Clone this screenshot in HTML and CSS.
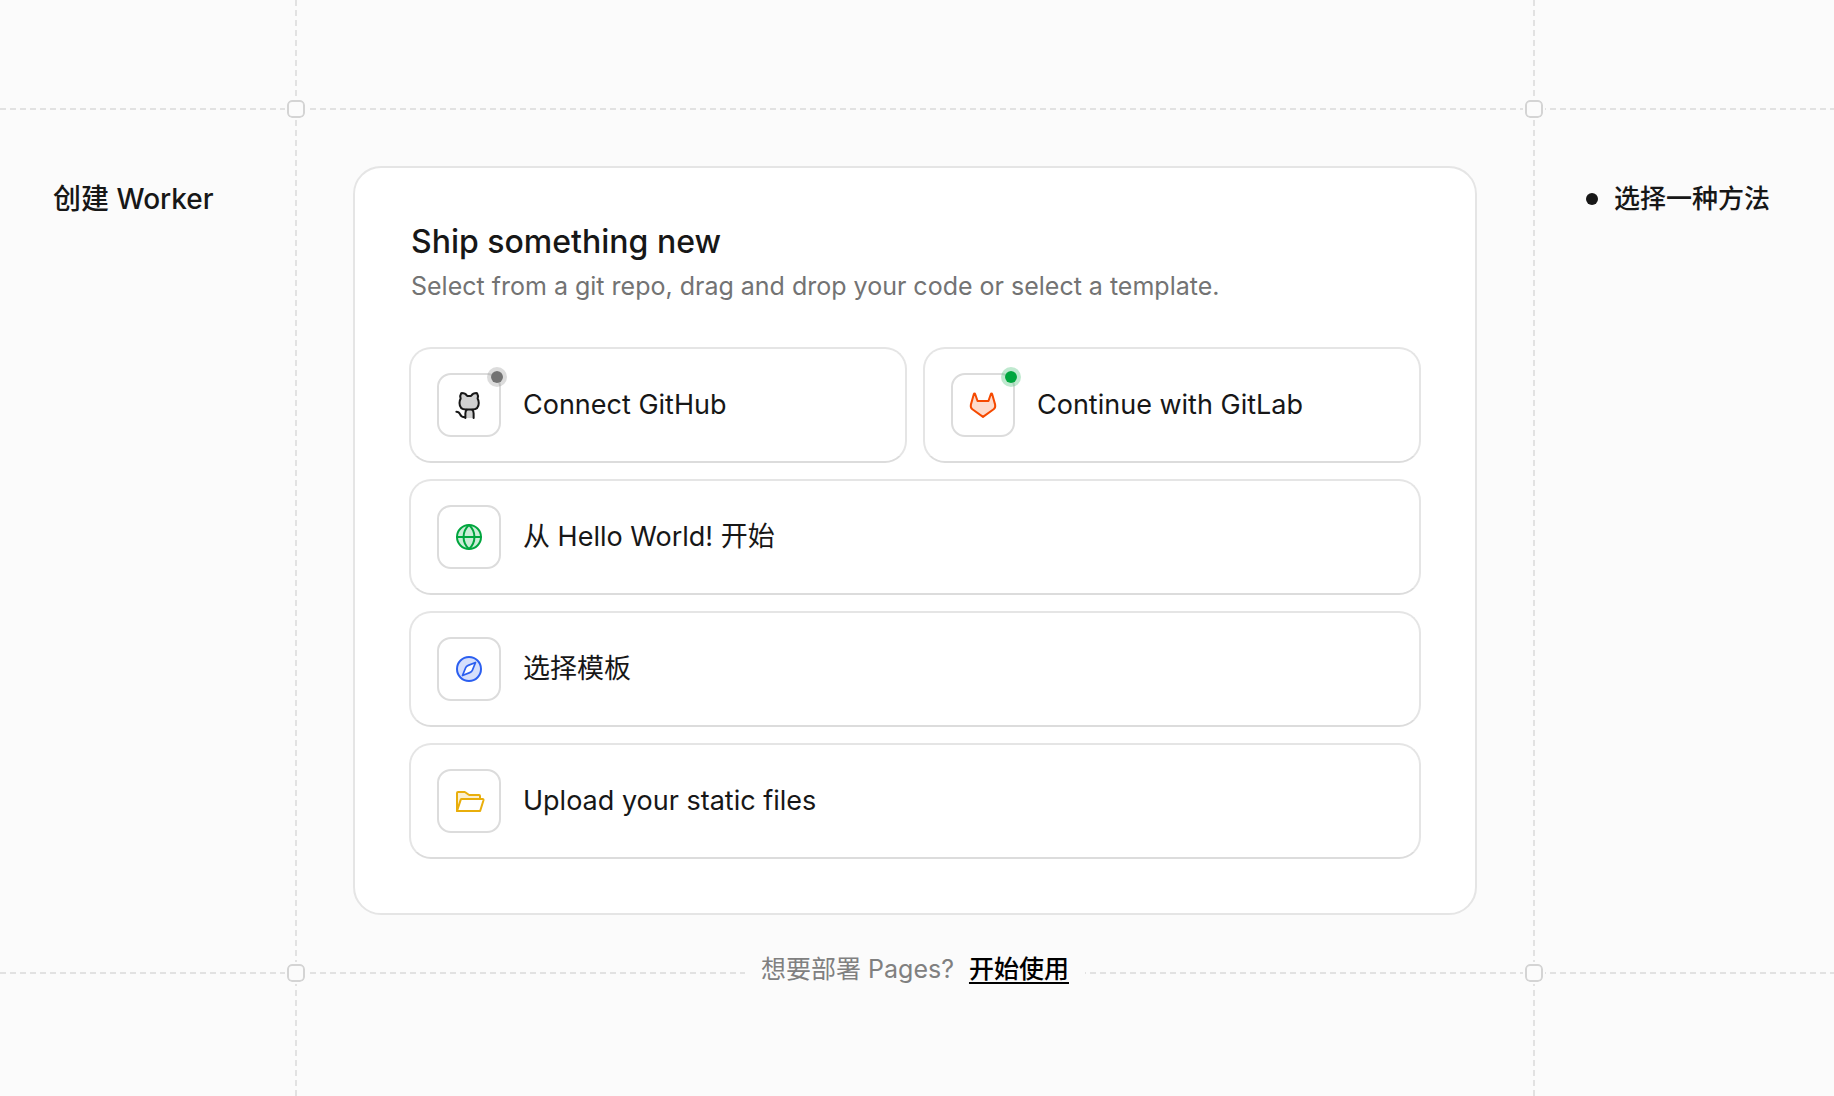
FILE: index.html
```
<!DOCTYPE html>
<html lang="zh-CN">
<head>
    <meta charset="UTF-8">
    <meta name="viewport" content="width=device-width, initial-scale=1.0">
    <title>创建 Worker</title>
    <link rel="stylesheet" href="styles.css">
</head>
<body>
    <div class="page">
        <div class="line line-top"></div>
        <div class="line line-bottom"></div>
        <div class="line line-left"></div>
        <div class="line line-right"></div>
        <span class="knot knot-tl"></span>
        <span class="knot knot-tr"></span>
        <span class="knot knot-bl"></span>
        <span class="knot knot-br"></span>

        <header class="side-title">
            <h1>创建 Worker</h1>
        </header>

        <main class="content">
            <section class="card">
                <h2>Ship something new</h2>
                <p class="subtitle">Select from a git repo, drag and drop your code or select a template.</p>

                <div class="options">
                    <button type="button" class="option">
                        <span class="icon icon-github">
                            <svg viewBox="0 0 256 256" aria-hidden="true">
                                <path class="tint" d="M114 56C104 42 86 32 66 33C57 47 56 62 61 77C55 87 52 97 52 112C52 144 72 164 104 164H99V232H165V164H154C186 164 206 144 206 112C206 97 203 87 197 77C202 62 201 47 192 33C172 32 154 42 144 56Z"/>
                                <path d="M114 56C104 42 86 32 66 33C57 47 56 62 61 77C55 87 52 97 52 112C52 144 72 164 104 164H154C186 164 206 144 206 112C206 97 203 87 197 77C202 62 201 47 192 33C172 32 154 42 144 56Z"/>
                                <path d="M99 232V196C99 182 103 172 110 166M154 166C161 172 165 182 165 196V232"/>
                                <path d="M27 181C42 181 50 186 56 201C62 217 72 226 97 226"/>
                            </svg>
                            <span class="status"></span>
                        </span>
                        Connect GitHub
                    </button>
                    <button type="button" class="option">
                        <span class="icon icon-gitlab">
                            <svg viewBox="0 0 256 256" aria-hidden="true">
                                <path class="tint" d="M84 95H172L195 37L225 125C228 141 225 153 213 162L128 223L43 162C31 153 28 141 31 125L61 37Z"/>
                                <path d="M84 95H172L191 40C193 34 199 34 201 40L225 125C228 141 225 153 213 162L128 223L43 162C31 153 28 141 31 125L55 40C57 34 63 34 65 40Z"/>
                            </svg>
                            <span class="status status-on"></span>
                        </span>
                        Continue with GitLab
                    </button>
                    <button type="button" class="option option-wide">
                        <span class="icon icon-globe">
                            <svg viewBox="0 0 256 256" aria-hidden="true">
                                <circle class="tint" cx="128" cy="128" r="96"/>
                                <circle cx="128" cy="128" r="96"/>
                                <path d="M128 32C70 84 70 172 128 224C186 172 186 84 128 32ZM32 128H224"/>
                            </svg>
                        </span>
                        从 Hello World! 开始
                    </button>
                    <button type="button" class="option option-wide">
                        <span class="icon icon-compass">
                            <svg viewBox="0 0 256 256" aria-hidden="true">
                                <circle class="tint" cx="128" cy="128" r="96"/>
                                <circle cx="128" cy="128" r="96"/>
                                <path class="needle" d="M180 76L122 99C112 103 105 108 101 118L76 180L134 157C144 153 151 148 155 138Z"/>
                            </svg>
                        </span>
                        选择模板
                    </button>
                    <button type="button" class="option option-wide">
                        <span class="icon icon-folder">
                            <svg viewBox="0 0 256 256" aria-hidden="true">
                                <path class="tint" d="M32 208L64 112H208V88L200 80H131L93 56H32Z"/>
                                <path d="M32 208V64A8 8 0 0 1 40 56H93A8 8 0 0 1 98 58L126 78A8 8 0 0 0 131 80H208A8 8 0 0 1 216 88V112"/>
                                <path d="M32 208L62 117A8 8 0 0 1 70 112H237A8 8 0 0 1 244 122L217 208Z"/>
                            </svg>
                        </span>
                        Upload your static files
                    </button>
                </div>
            </section>
        </main>

        <aside class="steps">
            <ul>
                <li>选择一种方法</li>
            </ul>
        </aside>

        <p class="pages-hint">想要部署 Pages? <a href="#">开始使用</a></p>
    </div>
</body>
</html>
```
FILE: styles.css
```
* {
    box-sizing: border-box;
}
body {
    margin: 0;
    font-family: Inter, "Noto Sans CJK SC", sans-serif;
    background: #fbfbfb;
    color: #171717;
}
h1, h2, p, ul {
    margin: 0;
    padding: 0;
}

/* The 2px tracks hold the dashed guide lines */
.page {
    display: grid;
    grid-template-columns: 295px 2px minmax(0, 1fr) 2px 299px;
    grid-template-rows: 108px 2px auto 2px 1fr;
    min-height: 100vh;
}
.line-top,
.line-bottom {
    grid-column: 1 / -1;
    background: repeating-linear-gradient(to right, #e2e2e2 0 6px, transparent 6px 10px);
}
.line-left,
.line-right {
    grid-row: 1 / -1;
    background: repeating-linear-gradient(to bottom, #e2e2e2 0 6px, transparent 6px 10px);
}
.line-top {
    grid-row: 2;
}
.line-bottom {
    grid-row: 4;
}
.line-left {
    grid-column: 2;
}
.line-right {
    grid-column: 4;
}
.knot {
    place-self: center;
    width: 18px;
    height: 18px;
    border: 2px solid #d4d4d4;
    border-radius: 5px;
    background: #fbfbfb;
    outline: 2px solid #fbfbfb;
}
.knot-tl {
    grid-area: 2 / 2;
}
.knot-tr {
    grid-area: 2 / 4;
}
.knot-bl {
    grid-area: 4 / 2;
}
.knot-br {
    grid-area: 4 / 4;
}

.side-title {
    grid-area: 3 / 1;
    padding: 69px 0 0 53px;
}
h1 {
    font-size: 28px;
    font-weight: 500;
    line-height: 40px;
}
.steps {
    grid-area: 3 / 5;
    padding: 69px 64px 0 0;
}
.steps ul {
    list-style: none;
}
.steps li {
    display: flex;
    align-items: center;
    justify-content: flex-end;
    gap: 16px;
    font-size: 26px;
    font-weight: 500;
    line-height: 40px;
}
.steps li::before {
    content: "";
    width: 12px;
    height: 12px;
    border-radius: 50%;
    background: #171717;
}

.content {
    grid-area: 3 / 3;
    padding: 56px 56px 57px;
}
.card {
    padding: 54px;
    border: 2px solid #e5e5e5;
    border-radius: 28px;
    background: white;
}
h2 {
    padding-left: 2px;
    font-size: 32px;
    font-weight: 500;
    line-height: 40px;
}
.subtitle {
    padding-left: 2px;
    margin: 4px 0 41px;
    color: #737373;
    font-size: 25px;
    line-height: 40px;
}
.options {
    display: grid;
    grid-template-columns: 1fr 1fr;
    gap: 16px;
}
.option {
    display: flex;
    align-items: center;
    gap: 22px;
    padding: 24px 26px;
    border: 2px solid #e5e5e5;
    border-bottom-color: #dcdcdc;
    border-radius: 22px;
    background: white;
    color: #171717;
    font-family: inherit;
    font-size: 27px;
    line-height: 40px;
    text-align: left;
    cursor: pointer;
}
.option:hover {
    background: #fafafa;
}
.option-wide {
    grid-column: 1 / -1;
}

.icon {
    position: relative;
    display: flex;
    align-items: center;
    justify-content: center;
    flex-shrink: 0;
    width: 64px;
    height: 64px;
    border: 2px solid #dcdcdc;
    border-radius: 14px;
}
.icon svg {
    width: 32px;
    height: 32px;
    fill: none;
    stroke: currentColor;
    stroke-width: 16;
    stroke-linecap: round;
    stroke-linejoin: round;
}
.icon .tint {
    fill: currentColor;
    stroke: none;
    opacity: 0.2;
}
.icon .needle {
    fill: white;
    stroke-width: 14;
}
.icon-github {
    color: #171717;
}
.icon-gitlab {
    color: #f54900;
}
.icon-globe {
    color: #00a63e;
}
.icon-compass {
    color: #2b5ff0;
}
.icon-folder {
    color: #e9ae0b;
}
.status {
    position: absolute;
    top: -8px;
    right: -8px;
    width: 20px;
    height: 20px;
    border: 4px solid rgba(115, 115, 115, 0.25);
    border-radius: 50%;
    background: #737373;
    background-clip: padding-box;
}
.status-on {
    border-color: rgba(0, 166, 62, 0.25);
    background-color: #00a63e;
}

.pages-hint {
    grid-area: 4 / 3;
    place-self: center;
    padding: 0 16px 8px;
    background: #fbfbfb;
    color: #808080;
    font-size: 25px;
    line-height: 40px;
}
.pages-hint a {
    margin-left: 8px;
    color: black;
    font-weight: 500;
    text-decoration: underline;
    text-decoration-thickness: 2px;
    text-underline-offset: 4px;
}
```
